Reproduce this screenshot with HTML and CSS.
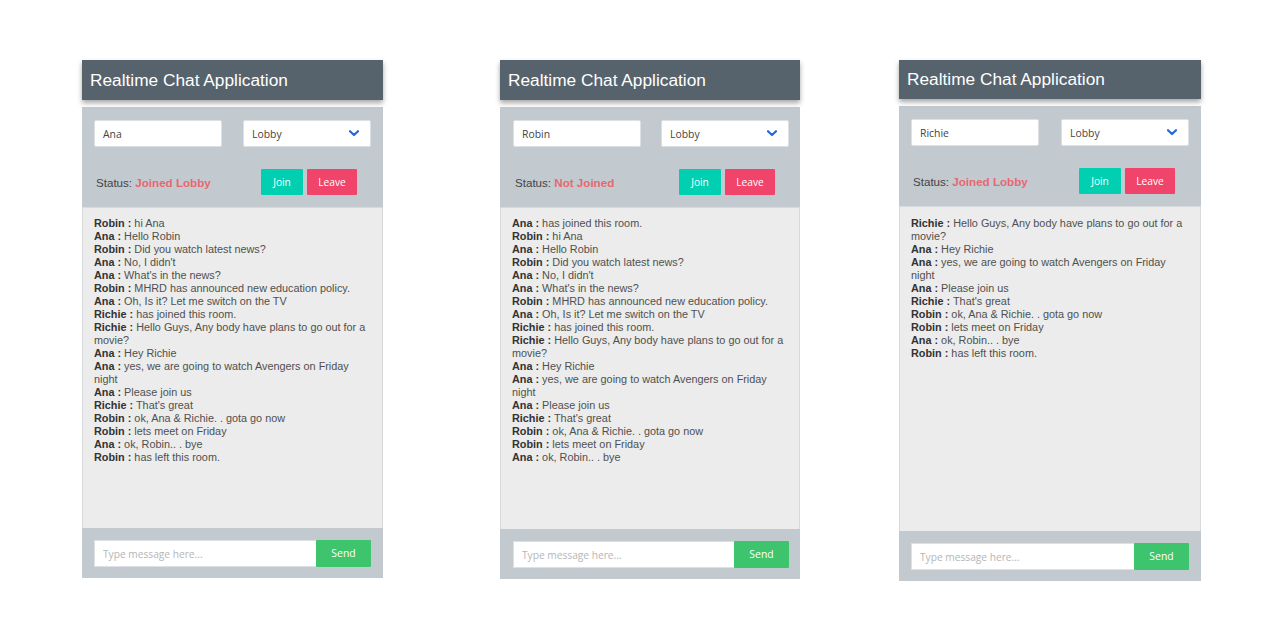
FILE: index.html
```html
<!DOCTYPE html>
<html>
<head>
<meta charset="utf-8">
<link rel="stylesheet" href="styles.css">
</head>
<body>
<div class="stage">

  <section class="panel p1">
    <header class="title">Realtime Chat Application</header>
    <div class="controls">
      <div class="row">
        <div class="field">Ana</div>
        <div class="field select">Lobby<svg class="chev" viewBox="0 0 10 7" width="10" height="7"><path d="M1 1.2 L5 5 L9 1.2" fill="none" stroke="#2567d8" stroke-width="2.2" stroke-linecap="round" stroke-linejoin="round"/></svg></div>
      </div>
      <div class="row status-row">
        <div class="status">Status: <b>Joined Lobby</b></div>
        <div class="btns"><span class="btn join">Join</span><span class="btn leave">Leave</span></div>
      </div>
    </div>
    <div class="chat">
      <p><b>Robin :</b> hi Ana</p>
      <p><b>Ana :</b> Hello Robin</p>
      <p><b>Robin :</b> Did you watch latest news?</p>
      <p><b>Ana :</b> No, I didn't</p>
      <p><b>Ana :</b> What's in the news?</p>
      <p><b>Robin :</b> MHRD has announced new education policy.</p>
      <p><b>Ana :</b> Oh, Is it? Let me switch on the TV</p>
      <p><b>Richie :</b> has joined this room.</p>
      <p><b>Richie :</b> Hello Guys, Any body have plans to go out for a movie?</p>
      <p><b>Ana :</b> Hey Richie</p>
      <p><b>Ana :</b> yes, we are going to watch Avengers on Friday night</p>
      <p><b>Ana :</b> Please join us</p>
      <p><b>Richie :</b> That's great</p>
      <p><b>Robin :</b> ok, Ana &amp; Richie. . gota go now</p>
      <p><b>Robin :</b> lets meet on Friday</p>
      <p><b>Ana :</b> ok, Robin.. . bye</p>
      <p><b>Robin :</b> has left this room.</p>
    </div>
    <div class="footer">
      <div class="msg">Type message here...</div>
      <span class="send">Send</span>
    </div>
  </section>

  <section class="panel p2">
    <header class="title">Realtime Chat Application</header>
    <div class="controls">
      <div class="row">
        <div class="field">Robin</div>
        <div class="field select">Lobby<svg class="chev" viewBox="0 0 10 7" width="10" height="7"><path d="M1 1.2 L5 5 L9 1.2" fill="none" stroke="#2567d8" stroke-width="2.2" stroke-linecap="round" stroke-linejoin="round"/></svg></div>
      </div>
      <div class="row status-row">
        <div class="status">Status: <b>Not Joined</b></div>
        <div class="btns"><span class="btn join">Join</span><span class="btn leave">Leave</span></div>
      </div>
    </div>
    <div class="chat">
      <p><b>Ana :</b> has joined this room.</p>
      <p><b>Robin :</b> hi Ana</p>
      <p><b>Ana :</b> Hello Robin</p>
      <p><b>Robin :</b> Did you watch latest news?</p>
      <p><b>Ana :</b> No, I didn't</p>
      <p><b>Ana :</b> What's in the news?</p>
      <p><b>Robin :</b> MHRD has announced new education policy.</p>
      <p><b>Ana :</b> Oh, Is it? Let me switch on the TV</p>
      <p><b>Richie :</b> has joined this room.</p>
      <p><b>Richie :</b> Hello Guys, Any body have plans to go out for a movie?</p>
      <p><b>Ana :</b> Hey Richie</p>
      <p><b>Ana :</b> yes, we are going to watch Avengers on Friday night</p>
      <p><b>Ana :</b> Please join us</p>
      <p><b>Richie :</b> That's great</p>
      <p><b>Robin :</b> ok, Ana &amp; Richie. . gota go now</p>
      <p><b>Robin :</b> lets meet on Friday</p>
      <p><b>Ana :</b> ok, Robin.. . bye</p>
    </div>
    <div class="footer">
      <div class="msg">Type message here...</div>
      <span class="send">Send</span>
    </div>
  </section>

  <section class="panel p3">
    <header class="title">Realtime Chat Application</header>
    <div class="controls">
      <div class="row">
        <div class="field">Richie</div>
        <div class="field select">Lobby<svg class="chev" viewBox="0 0 10 7" width="10" height="7"><path d="M1 1.2 L5 5 L9 1.2" fill="none" stroke="#2567d8" stroke-width="2.2" stroke-linecap="round" stroke-linejoin="round"/></svg></div>
      </div>
      <div class="row status-row">
        <div class="status">Status: <b>Joined Lobby</b></div>
        <div class="btns"><span class="btn join">Join</span><span class="btn leave">Leave</span></div>
      </div>
    </div>
    <div class="chat">
      <p><b>Richie :</b> Hello Guys, Any body have plans to go out for a movie?</p>
      <p><b>Ana :</b> Hey Richie</p>
      <p><b>Ana :</b> yes, we are going to watch Avengers on Friday night</p>
      <p><b>Ana :</b> Please join us</p>
      <p><b>Richie :</b> That's great</p>
      <p><b>Robin :</b> ok, Ana &amp; Richie. . gota go now</p>
      <p><b>Robin :</b> lets meet on Friday</p>
      <p><b>Ana :</b> ok, Robin.. . bye</p>
      <p><b>Robin :</b> has left this room.</p>
    </div>
    <div class="footer">
      <div class="msg">Type message here...</div>
      <span class="send">Send</span>
    </div>
  </section>

</div>
</body>
</html>
```

FILE: styles.css
```css
html, body {
  margin: 0;
  padding: 0;
  background: #ffffff;
}

.stage {
  display: flex;
  align-items: flex-start;
  padding: 60px 0 0 82px;
  font-family: "Liberation Sans", Arial, sans-serif;
}

.panel {
  display: flex;
  flex-direction: column;
  width: 301px;
  background: #ffffff;
}

.p2 { width: 300px; margin-left: 117px; }
.p3 { width: 302px; margin-left: 99px; }

.title {
  height: 40px;
  line-height: 40px;
  padding-left: 8px;
  background: #56636d;
  color: #ffffff;
  font-size: 17.3px;
  box-shadow: 0 3px 5px rgba(0, 0, 0, 0.35);
  position: relative;
  z-index: 1;
}

.p3 .title { height: 39px; line-height: 38px; }

.controls {
  margin-top: 7px;
  background: #c2c9cf;
  height: 100px;
  padding: 13px 12px 0;
  box-sizing: border-box;
}

.p2 .controls { padding-left: 13px; padding-right: 11px; }

.row {
  display: flex;
  justify-content: space-between;
  align-items: center;
}

.field {
  width: 128px;
  height: 27px;
  box-sizing: border-box;
  background: #ffffff;
  border: 1px solid #dde1e5;
  border-radius: 2px;
  padding: 0 8px;
  display: flex;
  align-items: center;
  justify-content: space-between;
  font-family: "Open Sans", "Noto Sans", sans-serif;
  font-size: 10.4px;
  color: #444;
}

.chev { margin-right: 3px; }

.status-row {
  margin-top: 22px;
  padding-left: 2px;
  padding-right: 14px;
}

.status {
  font-size: 11.6px;
  color: #444;
}

.status b {
  color: #e8676f;
}

.btns {
  display: flex;
  gap: 4px;
}

.btn {
  height: 26px;
  line-height: 26px;
  text-align: center;
  color: #ffffff;
  font-family: "Open Sans", "Noto Sans", sans-serif;
  font-size: 10.2px;
  border-radius: 1px;
}

.join { width: 42px; background: #00cfb1; }
.leave { width: 50px; background: #f0446a; }

.chat {
  height: 321px;
  box-sizing: border-box;
  background: #ebeceb;
  border: 1px solid #d6dadd;
  border-bottom: none;
  padding: 9px 10px 0 11px;
  font-size: 10.85px;
  line-height: 13px;
  color: #505050;
  overflow: hidden;
}

.p2 .chat { height: 322px; }
.p3 .chat { height: 325px; padding-top: 10px; }

.chat p {
  margin: 0;
}

.chat b {
  color: #333;
}

.footer {
  height: 50px;
  box-sizing: border-box;
  background: #c2c9cf;
  padding: 12px 12px 0;
  display: flex;
}

.p2 .footer { padding-left: 13px; padding-right: 11px; }

.msg {
  flex: 1;
  height: 27px;
  box-sizing: border-box;
  background: #ffffff;
  border: 1px solid #dde1e5;
  border-right: none;
  padding-left: 8px;
  display: flex;
  align-items: center;
  font-family: "Open Sans", "Noto Sans", sans-serif;
  font-size: 10.2px;
  color: #b3b6b9;
}

.send {
  width: 55px;
  height: 27px;
  line-height: 27px;
  text-align: center;
  background: #3ec46d;
  color: #ffffff;
  font-family: "Open Sans", "Noto Sans", sans-serif;
  font-size: 10.4px;
  border-radius: 1px;
}
```
